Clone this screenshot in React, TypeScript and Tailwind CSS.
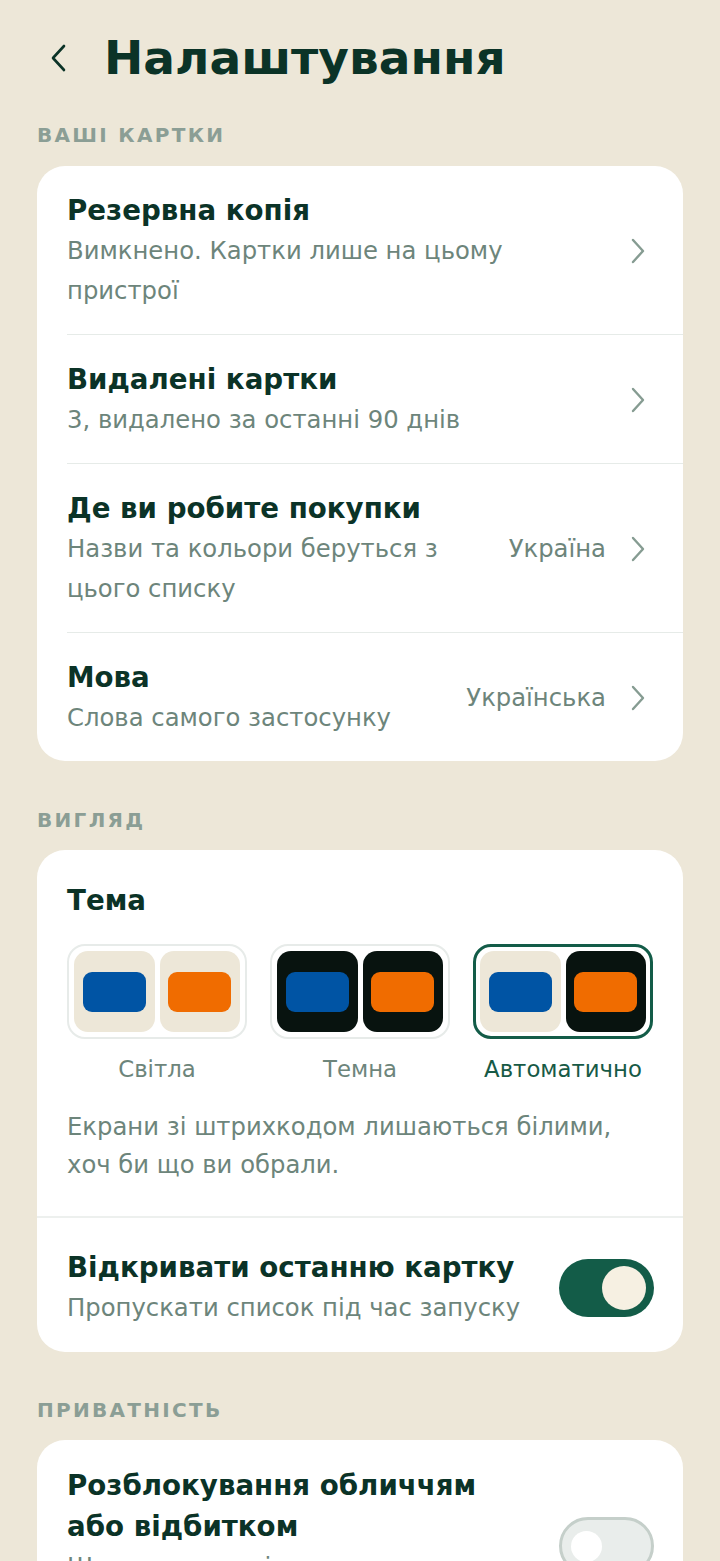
import React from "react";

const Chevron = () => (
  <svg width="16" height="26" viewBox="0 0 16 26" fill="none" className="shrink-0">
    <path d="M3 2 L13 13 L3 24" stroke="#869c92" strokeWidth="2.4" strokeLinecap="round" strokeLinejoin="round" />
  </svg>
);

const SectionHeader = ({ children }: { children: React.ReactNode }) => (
  <div className="text-[20px] leading-[24px] font-bold tracking-[0.115em] text-[#8b9e95] px-[37px]">{children}</div>
);

const Divider = ({ full }: { full?: boolean }) => (
  <div className={full ? "h-[2px] bg-[#edf0ee]" : "ml-[30px] h-px bg-[#e6ebe8]"} />
);

const Row = ({ title, sub, value }: { title: string; sub: string; value?: string }) => (
  <div className="flex items-center pl-[30px] pr-[37px] pt-[25px] pb-[23px]">
    <div className="flex-1 min-w-0 pr-[24px]">
      <div className="text-[27.7px] leading-[40px] font-bold text-[#0b3327]">{title}</div>
      <div className="text-[24.3px] leading-[40px] text-[#6d857b]">{sub}</div>
    </div>
    {value && <div className="text-[24.3px] leading-[40px] text-[#6d857b] mr-[24px] shrink-0">{value}</div>}
    <Chevron />
  </div>
);

const ThemeOption = ({
  left,
  right,
  label,
  selected,
}: {
  left: string;
  right: string;
  label: string;
  selected?: boolean;
}) => (
  <div className="flex flex-col items-center">
    <div
      className={
        selected
          ? "w-full h-[95px] rounded-[18px] border-[3px] border-[#135c48] p-[4px] flex gap-[5px]"
          : "w-full h-[95px] rounded-[18px] border-2 border-[#e7ebe9] p-[5px] flex gap-[5px]"
      }
    >
      <div className={`flex-1 rounded-[14px] flex items-center justify-center ${left}`}>
        <div className="w-[63px] h-[40px] rounded-[9px] bg-[#0054a4]" />
      </div>
      <div className={`flex-1 rounded-[14px] flex items-center justify-center ${right}`}>
        <div className="w-[63px] h-[40px] rounded-[9px] bg-[#f06c00]" />
      </div>
    </div>
    <div
      className={
        selected
          ? "mt-[16px] text-[22.8px] leading-[28px] text-[#175a46]"
          : "mt-[16px] text-[22.8px] leading-[28px] text-[#6d857b]"
      }
    >
      {label}
    </div>
  </div>
);

export default function App() {
  return (
    <div className="min-h-screen bg-[#ede7d8] font-['DejaVu_Sans',sans-serif] overflow-hidden">
      <div className="flex items-center pt-[30px] h-[86px]">
        <div className="w-[104px] flex justify-start pl-[48px]">
          <svg width="20" height="30" viewBox="0 0 20 30" fill="none">
            <path d="M16 3 L5 15 L16 27" stroke="#0b3327" strokeWidth="2.6" strokeLinecap="round" strokeLinejoin="round" />
          </svg>
        </div>
        <div className="text-[47px] leading-[56px] font-bold text-[#0b3327]">Налаштування</div>
      </div>

      <div className="mt-[37px]">
        <SectionHeader>ВАШІ КАРТКИ</SectionHeader>
      </div>
      <div className="mx-[37px] mt-[19px] bg-white rounded-[28px] overflow-hidden">
        <Row title="Резервна копія" sub="Вимкнено. Картки лише на цьому пристрої" />
        <Divider />
        <Row title="Видалені картки" sub="3, видалено за останні 90 днів" />
        <Divider />
        <Row title="Де ви робите покупки" sub="Назви та кольори беруться з цього списку" value="Україна" />
        <Divider />
        <Row title="Мова" sub="Слова самого застосунку" value="Українська" />
      </div>

      <div className="mt-[47px]">
        <SectionHeader>ВИГЛЯД</SectionHeader>
      </div>
      <div className="mx-[37px] mt-[18px] bg-white rounded-[28px] overflow-hidden">
        <div className="px-[30px] pt-[31px] pb-[32px]">
          <div className="text-[27.7px] leading-[40px] font-bold text-[#0b3327]">Тема</div>
          <div className="mt-[23px] grid grid-cols-3 gap-[23px]">
            <ThemeOption left="bg-[#ede7d8]" right="bg-[#ede7d8]" label="Світла" />
            <ThemeOption left="bg-[#08130f]" right="bg-[#08130f]" label="Темна" />
            <ThemeOption left="bg-[#ede7d8]" right="bg-[#08130f]" label="Автоматично" selected />
          </div>
          <div className="mt-[25px] text-[24.3px] leading-[38px] text-[#6d857b]">
            Екрани зі штрихкодом лишаються білими, хоч би що ви обрали.
          </div>
        </div>
        <Divider full />
        <div className="flex items-center pl-[30px] pr-[29px] pt-[30px] pb-[24px]">
          <div className="flex-1 min-w-0 pr-[16px]">
            <div className="text-[27.7px] leading-[40px] font-bold text-[#0b3327] whitespace-nowrap">Відкривати останню картку</div>
            <div className="text-[24.3px] leading-[40px] text-[#6d857b] whitespace-nowrap">Пропускати список під час запуску</div>
          </div>
          <div className="w-[95px] h-[58px] rounded-full bg-[#135c48] flex items-center justify-end pr-[8px] shrink-0">
            <div className="w-[44px] h-[44px] rounded-full bg-[#f6f0e2]" />
          </div>
        </div>
      </div>

      <div className="mt-[46px]">
        <SectionHeader>ПРИВАТНІСТЬ</SectionHeader>
      </div>
      <div className="mx-[37px] mt-[18px] bg-white rounded-[28px] overflow-hidden">
        <div className="flex items-center pl-[30px] pr-[29px] py-[25px]">
          <div className="flex-1 min-w-0 pr-[40px]">
            <div className="text-[27.7px] leading-[41px] font-bold text-[#0b3327]">
              Розблокування обличчям або відбитком
            </div>
            <div className="text-[24.3px] leading-[40px] text-[#6d857b]">
              Щоразу, коли відкриваєте застосунок
            </div>
          </div>
          <div className="w-[95px] h-[58px] rounded-full bg-[#e9edeb] border-[3px] border-[#c5cfca] flex items-center pl-[9px] shrink-0">
            <div className="w-[31px] h-[31px] rounded-full bg-white" />
          </div>
        </div>
      </div>
      <div className="h-[40px]" />
    </div>
  );
}
